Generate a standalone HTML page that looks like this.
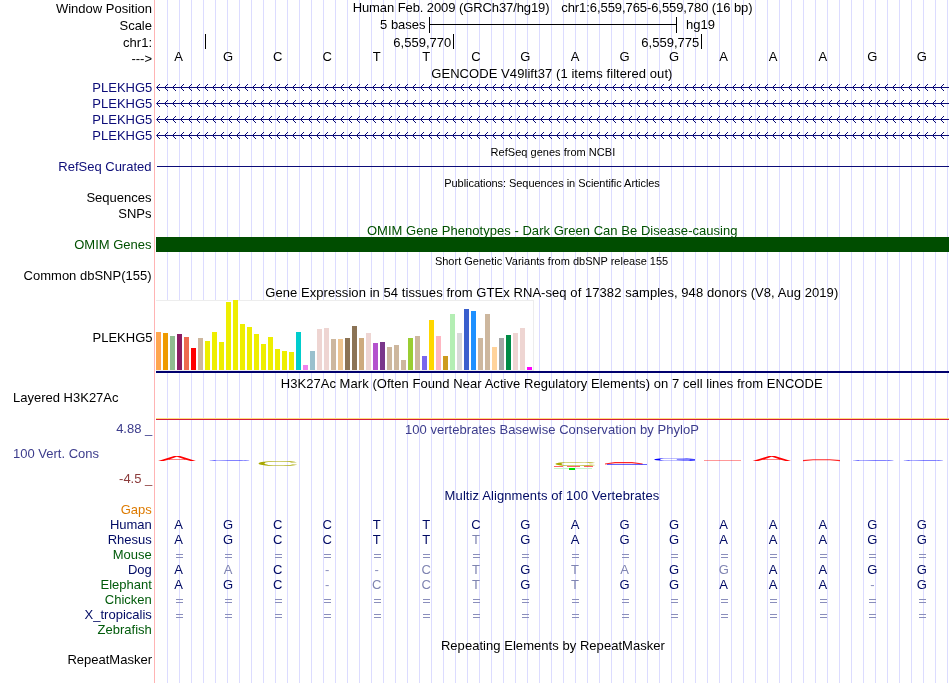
<!DOCTYPE html>
<html><head><meta charset="utf-8"><title>UCSC Genome Browser</title>
<style>
html,body{margin:0;padding:0;background:#fff;}
body{width:950px;height:683px;overflow:hidden;}
svg{display:block;will-change:transform;font-family:"Liberation Sans",sans-serif;font-size:13px;}
.s{font-size:11px;}
.r{text-anchor:end;}
.m{text-anchor:middle;}
</style></head><body>
<svg width="950" height="683" viewBox="0 0 950 683">
<rect width="950" height="683" fill="#fff"/>
<path d="M167.5 0V683M179.5 0V683M191.5 0V683M203.5 0V683M215.5 0V683M227.5 0V683M239.5 0V683M251.5 0V683M263.5 0V683M275.5 0V683M287.5 0V683M299.5 0V683M311.5 0V683M323.5 0V683M335.5 0V683M347.5 0V683M359.5 0V683M371.5 0V683M383.5 0V683M395.5 0V683M407.5 0V683M419.5 0V683M431.5 0V683M443.5 0V683M455.5 0V683M467.5 0V683M479.5 0V683M491.5 0V683M503.5 0V683M515.5 0V683M527.5 0V683M539.5 0V683M551.5 0V683M563.5 0V683M575.5 0V683M587.5 0V683M599.5 0V683M611.5 0V683M623.5 0V683M635.5 0V683M647.5 0V683M659.5 0V683M671.5 0V683M683.5 0V683M695.5 0V683M707.5 0V683M719.5 0V683M731.5 0V683M743.5 0V683M755.5 0V683M767.5 0V683M779.5 0V683M791.5 0V683M803.5 0V683M815.5 0V683M827.5 0V683M839.5 0V683M851.5 0V683M863.5 0V683M875.5 0V683M887.5 0V683M899.5 0V683M911.5 0V683M923.5 0V683M935.5 0V683M947.5 0V683" stroke="#dcdcff" stroke-width="1" fill="none" shape-rendering="crispEdges"/>
<path d="M154.5 0V683" stroke="#ffb4b4" stroke-width="1" shape-rendering="crispEdges"/>
<text x="152" y="13" class="r" fill="#000">Window Position</text>
<text x="152" y="30" class="r" fill="#000">Scale</text>
<text x="152" y="47" class="r" fill="#000">chr1:</text>
<text x="152" y="63" class="r" fill="#000">---&gt;</text>
<text x="352.70" y="12" fill="#000" textLength="196.85" xml:space="preserve">Human Feb. 2009 (GRCh37/hg19)</text>
<text x="561.30" y="12" fill="#000" textLength="191.30" xml:space="preserve">chr1:6,559,765-6,559,780 (16 bp)</text>
<text x="425.6" y="29" class="r" fill="#000">5 bases</text>
<text x="686" y="29" fill="#000">hg19</text>
<path d="M429.5 17V33M676.5 17V33M429 24.5H677" stroke="#000" stroke-width="1" fill="none" shape-rendering="crispEdges"/>
<path d="M205.5 34V49M453.5 34V49M701.5 34V49" stroke="#000" stroke-width="1" fill="none" shape-rendering="crispEdges"/>
<text x="451.2" y="47" class="r" fill="#000">6,559,770</text>
<text x="699.2" y="47" class="r" fill="#000">6,559,775</text>
<text x="178.5" y="61" class="m" fill="#000">A</text>
<text x="228.0" y="61" class="m" fill="#000">G</text>
<text x="277.6" y="61" class="m" fill="#000">C</text>
<text x="327.2" y="61" class="m" fill="#000">C</text>
<text x="376.7" y="61" class="m" fill="#000">T</text>
<text x="426.3" y="61" class="m" fill="#000">T</text>
<text x="475.9" y="61" class="m" fill="#000">C</text>
<text x="525.4" y="61" class="m" fill="#000">G</text>
<text x="575.0" y="61" class="m" fill="#000">A</text>
<text x="624.5" y="61" class="m" fill="#000">G</text>
<text x="674.1" y="61" class="m" fill="#000">G</text>
<text x="723.7" y="61" class="m" fill="#000">A</text>
<text x="773.2" y="61" class="m" fill="#000">A</text>
<text x="822.8" y="61" class="m" fill="#000">A</text>
<text x="872.4" y="61" class="m" fill="#000">G</text>
<text x="921.9" y="61" class="m" fill="#000">G</text>
<text x="431.20" y="78" fill="#000" textLength="241.22" xml:space="preserve">GENCODE V49lift37 (1 items filtered out)</text>
<text x="152.3" y="92" class="r" fill="#0c0c78">PLEKHG5</text>
<path d="M157 87.5H949" stroke="#0c0c78" stroke-width="1" shape-rendering="crispEdges"/>
<path d="M160.0 84.0L156.5 87.5L160.0 91.0M168.0 84.0L164.5 87.5L168.0 91.0M176.0 84.0L172.5 87.5L176.0 91.0M184.0 84.0L180.5 87.5L184.0 91.0M192.0 84.0L188.5 87.5L192.0 91.0M200.0 84.0L196.5 87.5L200.0 91.0M208.0 84.0L204.5 87.5L208.0 91.0M216.0 84.0L212.5 87.5L216.0 91.0M224.0 84.0L220.5 87.5L224.0 91.0M232.0 84.0L228.5 87.5L232.0 91.0M240.0 84.0L236.5 87.5L240.0 91.0M248.0 84.0L244.5 87.5L248.0 91.0M256.0 84.0L252.5 87.5L256.0 91.0M264.0 84.0L260.5 87.5L264.0 91.0M272.0 84.0L268.5 87.5L272.0 91.0M280.0 84.0L276.5 87.5L280.0 91.0M288.0 84.0L284.5 87.5L288.0 91.0M296.0 84.0L292.5 87.5L296.0 91.0M304.0 84.0L300.5 87.5L304.0 91.0M312.0 84.0L308.5 87.5L312.0 91.0M320.0 84.0L316.5 87.5L320.0 91.0M328.0 84.0L324.5 87.5L328.0 91.0M336.0 84.0L332.5 87.5L336.0 91.0M344.0 84.0L340.5 87.5L344.0 91.0M352.0 84.0L348.5 87.5L352.0 91.0M360.0 84.0L356.5 87.5L360.0 91.0M368.0 84.0L364.5 87.5L368.0 91.0M376.0 84.0L372.5 87.5L376.0 91.0M384.0 84.0L380.5 87.5L384.0 91.0M392.0 84.0L388.5 87.5L392.0 91.0M400.0 84.0L396.5 87.5L400.0 91.0M408.0 84.0L404.5 87.5L408.0 91.0M416.0 84.0L412.5 87.5L416.0 91.0M424.0 84.0L420.5 87.5L424.0 91.0M432.0 84.0L428.5 87.5L432.0 91.0M440.0 84.0L436.5 87.5L440.0 91.0M448.0 84.0L444.5 87.5L448.0 91.0M456.0 84.0L452.5 87.5L456.0 91.0M464.0 84.0L460.5 87.5L464.0 91.0M472.0 84.0L468.5 87.5L472.0 91.0M480.0 84.0L476.5 87.5L480.0 91.0M488.0 84.0L484.5 87.5L488.0 91.0M496.0 84.0L492.5 87.5L496.0 91.0M504.0 84.0L500.5 87.5L504.0 91.0M512.0 84.0L508.5 87.5L512.0 91.0M520.0 84.0L516.5 87.5L520.0 91.0M528.0 84.0L524.5 87.5L528.0 91.0M536.0 84.0L532.5 87.5L536.0 91.0M544.0 84.0L540.5 87.5L544.0 91.0M552.0 84.0L548.5 87.5L552.0 91.0M560.0 84.0L556.5 87.5L560.0 91.0M568.0 84.0L564.5 87.5L568.0 91.0M576.0 84.0L572.5 87.5L576.0 91.0M584.0 84.0L580.5 87.5L584.0 91.0M592.0 84.0L588.5 87.5L592.0 91.0M600.0 84.0L596.5 87.5L600.0 91.0M608.0 84.0L604.5 87.5L608.0 91.0M616.0 84.0L612.5 87.5L616.0 91.0M624.0 84.0L620.5 87.5L624.0 91.0M632.0 84.0L628.5 87.5L632.0 91.0M640.0 84.0L636.5 87.5L640.0 91.0M648.0 84.0L644.5 87.5L648.0 91.0M656.0 84.0L652.5 87.5L656.0 91.0M664.0 84.0L660.5 87.5L664.0 91.0M672.0 84.0L668.5 87.5L672.0 91.0M680.0 84.0L676.5 87.5L680.0 91.0M688.0 84.0L684.5 87.5L688.0 91.0M696.0 84.0L692.5 87.5L696.0 91.0M704.0 84.0L700.5 87.5L704.0 91.0M712.0 84.0L708.5 87.5L712.0 91.0M720.0 84.0L716.5 87.5L720.0 91.0M728.0 84.0L724.5 87.5L728.0 91.0M736.0 84.0L732.5 87.5L736.0 91.0M744.0 84.0L740.5 87.5L744.0 91.0M752.0 84.0L748.5 87.5L752.0 91.0M760.0 84.0L756.5 87.5L760.0 91.0M768.0 84.0L764.5 87.5L768.0 91.0M776.0 84.0L772.5 87.5L776.0 91.0M784.0 84.0L780.5 87.5L784.0 91.0M792.0 84.0L788.5 87.5L792.0 91.0M800.0 84.0L796.5 87.5L800.0 91.0M808.0 84.0L804.5 87.5L808.0 91.0M816.0 84.0L812.5 87.5L816.0 91.0M824.0 84.0L820.5 87.5L824.0 91.0M832.0 84.0L828.5 87.5L832.0 91.0M840.0 84.0L836.5 87.5L840.0 91.0M848.0 84.0L844.5 87.5L848.0 91.0M856.0 84.0L852.5 87.5L856.0 91.0M864.0 84.0L860.5 87.5L864.0 91.0M872.0 84.0L868.5 87.5L872.0 91.0M880.0 84.0L876.5 87.5L880.0 91.0M888.0 84.0L884.5 87.5L888.0 91.0M896.0 84.0L892.5 87.5L896.0 91.0M904.0 84.0L900.5 87.5L904.0 91.0M912.0 84.0L908.5 87.5L912.0 91.0M920.0 84.0L916.5 87.5L920.0 91.0M928.0 84.0L924.5 87.5L928.0 91.0M936.0 84.0L932.5 87.5L936.0 91.0M944.0 84.0L940.5 87.5L944.0 91.0" stroke="#0c0c78" stroke-width="1" fill="none"/>
<text x="152.3" y="108" class="r" fill="#0c0c78">PLEKHG5</text>
<path d="M157 103.5H949" stroke="#0c0c78" stroke-width="1" shape-rendering="crispEdges"/>
<path d="M160.0 100.0L156.5 103.5L160.0 107.0M168.0 100.0L164.5 103.5L168.0 107.0M176.0 100.0L172.5 103.5L176.0 107.0M184.0 100.0L180.5 103.5L184.0 107.0M192.0 100.0L188.5 103.5L192.0 107.0M200.0 100.0L196.5 103.5L200.0 107.0M208.0 100.0L204.5 103.5L208.0 107.0M216.0 100.0L212.5 103.5L216.0 107.0M224.0 100.0L220.5 103.5L224.0 107.0M232.0 100.0L228.5 103.5L232.0 107.0M240.0 100.0L236.5 103.5L240.0 107.0M248.0 100.0L244.5 103.5L248.0 107.0M256.0 100.0L252.5 103.5L256.0 107.0M264.0 100.0L260.5 103.5L264.0 107.0M272.0 100.0L268.5 103.5L272.0 107.0M280.0 100.0L276.5 103.5L280.0 107.0M288.0 100.0L284.5 103.5L288.0 107.0M296.0 100.0L292.5 103.5L296.0 107.0M304.0 100.0L300.5 103.5L304.0 107.0M312.0 100.0L308.5 103.5L312.0 107.0M320.0 100.0L316.5 103.5L320.0 107.0M328.0 100.0L324.5 103.5L328.0 107.0M336.0 100.0L332.5 103.5L336.0 107.0M344.0 100.0L340.5 103.5L344.0 107.0M352.0 100.0L348.5 103.5L352.0 107.0M360.0 100.0L356.5 103.5L360.0 107.0M368.0 100.0L364.5 103.5L368.0 107.0M376.0 100.0L372.5 103.5L376.0 107.0M384.0 100.0L380.5 103.5L384.0 107.0M392.0 100.0L388.5 103.5L392.0 107.0M400.0 100.0L396.5 103.5L400.0 107.0M408.0 100.0L404.5 103.5L408.0 107.0M416.0 100.0L412.5 103.5L416.0 107.0M424.0 100.0L420.5 103.5L424.0 107.0M432.0 100.0L428.5 103.5L432.0 107.0M440.0 100.0L436.5 103.5L440.0 107.0M448.0 100.0L444.5 103.5L448.0 107.0M456.0 100.0L452.5 103.5L456.0 107.0M464.0 100.0L460.5 103.5L464.0 107.0M472.0 100.0L468.5 103.5L472.0 107.0M480.0 100.0L476.5 103.5L480.0 107.0M488.0 100.0L484.5 103.5L488.0 107.0M496.0 100.0L492.5 103.5L496.0 107.0M504.0 100.0L500.5 103.5L504.0 107.0M512.0 100.0L508.5 103.5L512.0 107.0M520.0 100.0L516.5 103.5L520.0 107.0M528.0 100.0L524.5 103.5L528.0 107.0M536.0 100.0L532.5 103.5L536.0 107.0M544.0 100.0L540.5 103.5L544.0 107.0M552.0 100.0L548.5 103.5L552.0 107.0M560.0 100.0L556.5 103.5L560.0 107.0M568.0 100.0L564.5 103.5L568.0 107.0M576.0 100.0L572.5 103.5L576.0 107.0M584.0 100.0L580.5 103.5L584.0 107.0M592.0 100.0L588.5 103.5L592.0 107.0M600.0 100.0L596.5 103.5L600.0 107.0M608.0 100.0L604.5 103.5L608.0 107.0M616.0 100.0L612.5 103.5L616.0 107.0M624.0 100.0L620.5 103.5L624.0 107.0M632.0 100.0L628.5 103.5L632.0 107.0M640.0 100.0L636.5 103.5L640.0 107.0M648.0 100.0L644.5 103.5L648.0 107.0M656.0 100.0L652.5 103.5L656.0 107.0M664.0 100.0L660.5 103.5L664.0 107.0M672.0 100.0L668.5 103.5L672.0 107.0M680.0 100.0L676.5 103.5L680.0 107.0M688.0 100.0L684.5 103.5L688.0 107.0M696.0 100.0L692.5 103.5L696.0 107.0M704.0 100.0L700.5 103.5L704.0 107.0M712.0 100.0L708.5 103.5L712.0 107.0M720.0 100.0L716.5 103.5L720.0 107.0M728.0 100.0L724.5 103.5L728.0 107.0M736.0 100.0L732.5 103.5L736.0 107.0M744.0 100.0L740.5 103.5L744.0 107.0M752.0 100.0L748.5 103.5L752.0 107.0M760.0 100.0L756.5 103.5L760.0 107.0M768.0 100.0L764.5 103.5L768.0 107.0M776.0 100.0L772.5 103.5L776.0 107.0M784.0 100.0L780.5 103.5L784.0 107.0M792.0 100.0L788.5 103.5L792.0 107.0M800.0 100.0L796.5 103.5L800.0 107.0M808.0 100.0L804.5 103.5L808.0 107.0M816.0 100.0L812.5 103.5L816.0 107.0M824.0 100.0L820.5 103.5L824.0 107.0M832.0 100.0L828.5 103.5L832.0 107.0M840.0 100.0L836.5 103.5L840.0 107.0M848.0 100.0L844.5 103.5L848.0 107.0M856.0 100.0L852.5 103.5L856.0 107.0M864.0 100.0L860.5 103.5L864.0 107.0M872.0 100.0L868.5 103.5L872.0 107.0M880.0 100.0L876.5 103.5L880.0 107.0M888.0 100.0L884.5 103.5L888.0 107.0M896.0 100.0L892.5 103.5L896.0 107.0M904.0 100.0L900.5 103.5L904.0 107.0M912.0 100.0L908.5 103.5L912.0 107.0M920.0 100.0L916.5 103.5L920.0 107.0M928.0 100.0L924.5 103.5L928.0 107.0M936.0 100.0L932.5 103.5L936.0 107.0M944.0 100.0L940.5 103.5L944.0 107.0" stroke="#0c0c78" stroke-width="1" fill="none"/>
<text x="152.3" y="124" class="r" fill="#0c0c78">PLEKHG5</text>
<path d="M157 119.5H949" stroke="#0c0c78" stroke-width="1" shape-rendering="crispEdges"/>
<path d="M160.0 116.0L156.5 119.5L160.0 123.0M168.0 116.0L164.5 119.5L168.0 123.0M176.0 116.0L172.5 119.5L176.0 123.0M184.0 116.0L180.5 119.5L184.0 123.0M192.0 116.0L188.5 119.5L192.0 123.0M200.0 116.0L196.5 119.5L200.0 123.0M208.0 116.0L204.5 119.5L208.0 123.0M216.0 116.0L212.5 119.5L216.0 123.0M224.0 116.0L220.5 119.5L224.0 123.0M232.0 116.0L228.5 119.5L232.0 123.0M240.0 116.0L236.5 119.5L240.0 123.0M248.0 116.0L244.5 119.5L248.0 123.0M256.0 116.0L252.5 119.5L256.0 123.0M264.0 116.0L260.5 119.5L264.0 123.0M272.0 116.0L268.5 119.5L272.0 123.0M280.0 116.0L276.5 119.5L280.0 123.0M288.0 116.0L284.5 119.5L288.0 123.0M296.0 116.0L292.5 119.5L296.0 123.0M304.0 116.0L300.5 119.5L304.0 123.0M312.0 116.0L308.5 119.5L312.0 123.0M320.0 116.0L316.5 119.5L320.0 123.0M328.0 116.0L324.5 119.5L328.0 123.0M336.0 116.0L332.5 119.5L336.0 123.0M344.0 116.0L340.5 119.5L344.0 123.0M352.0 116.0L348.5 119.5L352.0 123.0M360.0 116.0L356.5 119.5L360.0 123.0M368.0 116.0L364.5 119.5L368.0 123.0M376.0 116.0L372.5 119.5L376.0 123.0M384.0 116.0L380.5 119.5L384.0 123.0M392.0 116.0L388.5 119.5L392.0 123.0M400.0 116.0L396.5 119.5L400.0 123.0M408.0 116.0L404.5 119.5L408.0 123.0M416.0 116.0L412.5 119.5L416.0 123.0M424.0 116.0L420.5 119.5L424.0 123.0M432.0 116.0L428.5 119.5L432.0 123.0M440.0 116.0L436.5 119.5L440.0 123.0M448.0 116.0L444.5 119.5L448.0 123.0M456.0 116.0L452.5 119.5L456.0 123.0M464.0 116.0L460.5 119.5L464.0 123.0M472.0 116.0L468.5 119.5L472.0 123.0M480.0 116.0L476.5 119.5L480.0 123.0M488.0 116.0L484.5 119.5L488.0 123.0M496.0 116.0L492.5 119.5L496.0 123.0M504.0 116.0L500.5 119.5L504.0 123.0M512.0 116.0L508.5 119.5L512.0 123.0M520.0 116.0L516.5 119.5L520.0 123.0M528.0 116.0L524.5 119.5L528.0 123.0M536.0 116.0L532.5 119.5L536.0 123.0M544.0 116.0L540.5 119.5L544.0 123.0M552.0 116.0L548.5 119.5L552.0 123.0M560.0 116.0L556.5 119.5L560.0 123.0M568.0 116.0L564.5 119.5L568.0 123.0M576.0 116.0L572.5 119.5L576.0 123.0M584.0 116.0L580.5 119.5L584.0 123.0M592.0 116.0L588.5 119.5L592.0 123.0M600.0 116.0L596.5 119.5L600.0 123.0M608.0 116.0L604.5 119.5L608.0 123.0M616.0 116.0L612.5 119.5L616.0 123.0M624.0 116.0L620.5 119.5L624.0 123.0M632.0 116.0L628.5 119.5L632.0 123.0M640.0 116.0L636.5 119.5L640.0 123.0M648.0 116.0L644.5 119.5L648.0 123.0M656.0 116.0L652.5 119.5L656.0 123.0M664.0 116.0L660.5 119.5L664.0 123.0M672.0 116.0L668.5 119.5L672.0 123.0M680.0 116.0L676.5 119.5L680.0 123.0M688.0 116.0L684.5 119.5L688.0 123.0M696.0 116.0L692.5 119.5L696.0 123.0M704.0 116.0L700.5 119.5L704.0 123.0M712.0 116.0L708.5 119.5L712.0 123.0M720.0 116.0L716.5 119.5L720.0 123.0M728.0 116.0L724.5 119.5L728.0 123.0M736.0 116.0L732.5 119.5L736.0 123.0M744.0 116.0L740.5 119.5L744.0 123.0M752.0 116.0L748.5 119.5L752.0 123.0M760.0 116.0L756.5 119.5L760.0 123.0M768.0 116.0L764.5 119.5L768.0 123.0M776.0 116.0L772.5 119.5L776.0 123.0M784.0 116.0L780.5 119.5L784.0 123.0M792.0 116.0L788.5 119.5L792.0 123.0M800.0 116.0L796.5 119.5L800.0 123.0M808.0 116.0L804.5 119.5L808.0 123.0M816.0 116.0L812.5 119.5L816.0 123.0M824.0 116.0L820.5 119.5L824.0 123.0M832.0 116.0L828.5 119.5L832.0 123.0M840.0 116.0L836.5 119.5L840.0 123.0M848.0 116.0L844.5 119.5L848.0 123.0M856.0 116.0L852.5 119.5L856.0 123.0M864.0 116.0L860.5 119.5L864.0 123.0M872.0 116.0L868.5 119.5L872.0 123.0M880.0 116.0L876.5 119.5L880.0 123.0M888.0 116.0L884.5 119.5L888.0 123.0M896.0 116.0L892.5 119.5L896.0 123.0M904.0 116.0L900.5 119.5L904.0 123.0M912.0 116.0L908.5 119.5L912.0 123.0M920.0 116.0L916.5 119.5L920.0 123.0M928.0 116.0L924.5 119.5L928.0 123.0M936.0 116.0L932.5 119.5L936.0 123.0M944.0 116.0L940.5 119.5L944.0 123.0" stroke="#0c0c78" stroke-width="1" fill="none"/>
<text x="152.3" y="140" class="r" fill="#0c0c78">PLEKHG5</text>
<path d="M157 135.5H949" stroke="#0c0c78" stroke-width="1" shape-rendering="crispEdges"/>
<path d="M160.0 132.0L156.5 135.5L160.0 139.0M168.0 132.0L164.5 135.5L168.0 139.0M176.0 132.0L172.5 135.5L176.0 139.0M184.0 132.0L180.5 135.5L184.0 139.0M192.0 132.0L188.5 135.5L192.0 139.0M200.0 132.0L196.5 135.5L200.0 139.0M208.0 132.0L204.5 135.5L208.0 139.0M216.0 132.0L212.5 135.5L216.0 139.0M224.0 132.0L220.5 135.5L224.0 139.0M232.0 132.0L228.5 135.5L232.0 139.0M240.0 132.0L236.5 135.5L240.0 139.0M248.0 132.0L244.5 135.5L248.0 139.0M256.0 132.0L252.5 135.5L256.0 139.0M264.0 132.0L260.5 135.5L264.0 139.0M272.0 132.0L268.5 135.5L272.0 139.0M280.0 132.0L276.5 135.5L280.0 139.0M288.0 132.0L284.5 135.5L288.0 139.0M296.0 132.0L292.5 135.5L296.0 139.0M304.0 132.0L300.5 135.5L304.0 139.0M312.0 132.0L308.5 135.5L312.0 139.0M320.0 132.0L316.5 135.5L320.0 139.0M328.0 132.0L324.5 135.5L328.0 139.0M336.0 132.0L332.5 135.5L336.0 139.0M344.0 132.0L340.5 135.5L344.0 139.0M352.0 132.0L348.5 135.5L352.0 139.0M360.0 132.0L356.5 135.5L360.0 139.0M368.0 132.0L364.5 135.5L368.0 139.0M376.0 132.0L372.5 135.5L376.0 139.0M384.0 132.0L380.5 135.5L384.0 139.0M392.0 132.0L388.5 135.5L392.0 139.0M400.0 132.0L396.5 135.5L400.0 139.0M408.0 132.0L404.5 135.5L408.0 139.0M416.0 132.0L412.5 135.5L416.0 139.0M424.0 132.0L420.5 135.5L424.0 139.0M432.0 132.0L428.5 135.5L432.0 139.0M440.0 132.0L436.5 135.5L440.0 139.0M448.0 132.0L444.5 135.5L448.0 139.0M456.0 132.0L452.5 135.5L456.0 139.0M464.0 132.0L460.5 135.5L464.0 139.0M472.0 132.0L468.5 135.5L472.0 139.0M480.0 132.0L476.5 135.5L480.0 139.0M488.0 132.0L484.5 135.5L488.0 139.0M496.0 132.0L492.5 135.5L496.0 139.0M504.0 132.0L500.5 135.5L504.0 139.0M512.0 132.0L508.5 135.5L512.0 139.0M520.0 132.0L516.5 135.5L520.0 139.0M528.0 132.0L524.5 135.5L528.0 139.0M536.0 132.0L532.5 135.5L536.0 139.0M544.0 132.0L540.5 135.5L544.0 139.0M552.0 132.0L548.5 135.5L552.0 139.0M560.0 132.0L556.5 135.5L560.0 139.0M568.0 132.0L564.5 135.5L568.0 139.0M576.0 132.0L572.5 135.5L576.0 139.0M584.0 132.0L580.5 135.5L584.0 139.0M592.0 132.0L588.5 135.5L592.0 139.0M600.0 132.0L596.5 135.5L600.0 139.0M608.0 132.0L604.5 135.5L608.0 139.0M616.0 132.0L612.5 135.5L616.0 139.0M624.0 132.0L620.5 135.5L624.0 139.0M632.0 132.0L628.5 135.5L632.0 139.0M640.0 132.0L636.5 135.5L640.0 139.0M648.0 132.0L644.5 135.5L648.0 139.0M656.0 132.0L652.5 135.5L656.0 139.0M664.0 132.0L660.5 135.5L664.0 139.0M672.0 132.0L668.5 135.5L672.0 139.0M680.0 132.0L676.5 135.5L680.0 139.0M688.0 132.0L684.5 135.5L688.0 139.0M696.0 132.0L692.5 135.5L696.0 139.0M704.0 132.0L700.5 135.5L704.0 139.0M712.0 132.0L708.5 135.5L712.0 139.0M720.0 132.0L716.5 135.5L720.0 139.0M728.0 132.0L724.5 135.5L728.0 139.0M736.0 132.0L732.5 135.5L736.0 139.0M744.0 132.0L740.5 135.5L744.0 139.0M752.0 132.0L748.5 135.5L752.0 139.0M760.0 132.0L756.5 135.5L760.0 139.0M768.0 132.0L764.5 135.5L768.0 139.0M776.0 132.0L772.5 135.5L776.0 139.0M784.0 132.0L780.5 135.5L784.0 139.0M792.0 132.0L788.5 135.5L792.0 139.0M800.0 132.0L796.5 135.5L800.0 139.0M808.0 132.0L804.5 135.5L808.0 139.0M816.0 132.0L812.5 135.5L816.0 139.0M824.0 132.0L820.5 135.5L824.0 139.0M832.0 132.0L828.5 135.5L832.0 139.0M840.0 132.0L836.5 135.5L840.0 139.0M848.0 132.0L844.5 135.5L848.0 139.0M856.0 132.0L852.5 135.5L856.0 139.0M864.0 132.0L860.5 135.5L864.0 139.0M872.0 132.0L868.5 135.5L872.0 139.0M880.0 132.0L876.5 135.5L880.0 139.0M888.0 132.0L884.5 135.5L888.0 139.0M896.0 132.0L892.5 135.5L896.0 139.0M904.0 132.0L900.5 135.5L904.0 139.0M912.0 132.0L908.5 135.5L912.0 139.0M920.0 132.0L916.5 135.5L920.0 139.0M928.0 132.0L924.5 135.5L928.0 139.0M936.0 132.0L932.5 135.5L936.0 139.0M944.0 132.0L940.5 135.5L944.0 139.0" stroke="#0c0c78" stroke-width="1" fill="none"/>
<text x="490.60" y="156" fill="#000" class="s" textLength="124.62" xml:space="preserve">RefSeq genes from NCBI</text>
<text x="151.5" y="171" class="r" fill="#0c0c78">RefSeq Curated</text>
<path d="M157 166.5H949" stroke="#0c0c78" stroke-width="1" shape-rendering="crispEdges"/>
<text x="444.20" y="187" fill="#000" class="s" textLength="215.67" xml:space="preserve">Publications: Sequences in Scientific Articles</text>
<text x="151.5" y="202" class="r" fill="#000">Sequences</text>
<text x="151.5" y="218" class="r" fill="#000">SNPs</text>
<text x="366.90" y="235" fill="#005000" textLength="370.62" xml:space="preserve">OMIM Gene Phenotypes - Dark Green Can Be Disease-causing</text>
<text x="151.5" y="249" class="r" fill="#005000">OMIM Genes</text>
<rect x="156" y="237" width="793" height="15" fill="#004d00" shape-rendering="crispEdges"/>
<text x="434.90" y="265" fill="#000" class="s" textLength="233.27" xml:space="preserve">Short Genetic Variants from dbSNP release 155</text>
<text x="151.5" y="280" class="r" fill="#000">Common dbSNP(155)</text>
<text x="265.30" y="297" fill="#000" textLength="572.95" xml:space="preserve">Gene Expression in 54 tissues from GTEx RNA-seq of 17382 samples, 948 donors (V8, Aug 2019)</text>
<text x="152.5" y="342" class="r" fill="#000">PLEKHG5</text>
<rect x="156" y="300" width="378" height="71" fill="#fff" shape-rendering="crispEdges"/>
<path d="M156 300.5H534M533.5 300V371M156 370.5H534" stroke="#ededed" stroke-width="1" fill="none" shape-rendering="crispEdges"/>
<rect x="156" y="332" width="5" height="38" fill="#ffa54f" shape-rendering="crispEdges"/>
<rect x="163" y="333" width="5" height="37" fill="#ee9a00" shape-rendering="crispEdges"/>
<rect x="170" y="336" width="5" height="34" fill="#8fbc8f" shape-rendering="crispEdges"/>
<rect x="177" y="334" width="5" height="36" fill="#8b1c62" shape-rendering="crispEdges"/>
<rect x="184" y="337" width="5" height="33" fill="#ee6a50" shape-rendering="crispEdges"/>
<rect x="191" y="348" width="5" height="22" fill="#ff0000" shape-rendering="crispEdges"/>
<rect x="198" y="338" width="5" height="32" fill="#cdb79e" shape-rendering="crispEdges"/>
<rect x="205" y="341" width="5" height="29" fill="#eeee00" shape-rendering="crispEdges"/>
<rect x="212" y="332" width="5" height="38" fill="#eeee00" shape-rendering="crispEdges"/>
<rect x="219" y="342" width="5" height="28" fill="#eeee00" shape-rendering="crispEdges"/>
<rect x="226" y="302" width="5" height="68" fill="#eeee00" shape-rendering="crispEdges"/>
<rect x="233" y="300" width="5" height="70" fill="#eeee00" shape-rendering="crispEdges"/>
<rect x="240" y="324" width="5" height="46" fill="#eeee00" shape-rendering="crispEdges"/>
<rect x="247" y="327" width="5" height="43" fill="#eeee00" shape-rendering="crispEdges"/>
<rect x="254" y="334" width="5" height="36" fill="#eeee00" shape-rendering="crispEdges"/>
<rect x="261" y="344" width="5" height="26" fill="#eeee00" shape-rendering="crispEdges"/>
<rect x="268" y="337" width="5" height="33" fill="#eeee00" shape-rendering="crispEdges"/>
<rect x="275" y="349" width="5" height="21" fill="#eeee00" shape-rendering="crispEdges"/>
<rect x="282" y="351" width="5" height="19" fill="#eeee00" shape-rendering="crispEdges"/>
<rect x="289" y="352" width="5" height="18" fill="#eeee00" shape-rendering="crispEdges"/>
<rect x="296" y="332" width="5" height="38" fill="#00cdcd" shape-rendering="crispEdges"/>
<rect x="303" y="365" width="5" height="5" fill="#ee82ee" shape-rendering="crispEdges"/>
<rect x="310" y="351" width="5" height="19" fill="#9ac0cd" shape-rendering="crispEdges"/>
<rect x="317" y="329" width="5" height="41" fill="#eed5d2" shape-rendering="crispEdges"/>
<rect x="324" y="328" width="5" height="42" fill="#eed5d2" shape-rendering="crispEdges"/>
<rect x="331" y="339" width="5" height="31" fill="#cdb79e" shape-rendering="crispEdges"/>
<rect x="338" y="339" width="5" height="31" fill="#eec591" shape-rendering="crispEdges"/>
<rect x="345" y="338" width="5" height="32" fill="#8b7355" shape-rendering="crispEdges"/>
<rect x="352" y="326" width="5" height="44" fill="#8b7355" shape-rendering="crispEdges"/>
<rect x="359" y="338" width="5" height="32" fill="#cdaa7d" shape-rendering="crispEdges"/>
<rect x="366" y="333" width="5" height="37" fill="#eed5d2" shape-rendering="crispEdges"/>
<rect x="373" y="343" width="5" height="27" fill="#b452cd" shape-rendering="crispEdges"/>
<rect x="380" y="342" width="5" height="28" fill="#7a378b" shape-rendering="crispEdges"/>
<rect x="387" y="347" width="5" height="23" fill="#cdb79e" shape-rendering="crispEdges"/>
<rect x="394" y="345" width="5" height="25" fill="#cdb79e" shape-rendering="crispEdges"/>
<rect x="401" y="360" width="5" height="10" fill="#cdb79e" shape-rendering="crispEdges"/>
<rect x="408" y="338" width="5" height="32" fill="#9acd32" shape-rendering="crispEdges"/>
<rect x="415" y="336" width="5" height="34" fill="#cdb79e" shape-rendering="crispEdges"/>
<rect x="422" y="356" width="5" height="14" fill="#7a67ee" shape-rendering="crispEdges"/>
<rect x="429" y="320" width="5" height="50" fill="#ffd700" shape-rendering="crispEdges"/>
<rect x="436" y="336" width="5" height="34" fill="#ffb6c1" shape-rendering="crispEdges"/>
<rect x="443" y="356" width="5" height="14" fill="#cd9b1d" shape-rendering="crispEdges"/>
<rect x="450" y="314" width="5" height="56" fill="#b4eeb4" shape-rendering="crispEdges"/>
<rect x="457" y="333" width="5" height="37" fill="#d9d9d9" shape-rendering="crispEdges"/>
<rect x="464" y="309" width="5" height="61" fill="#3a5fcd" shape-rendering="crispEdges"/>
<rect x="471" y="311" width="5" height="59" fill="#1e90ff" shape-rendering="crispEdges"/>
<rect x="478" y="338" width="5" height="32" fill="#cdb79e" shape-rendering="crispEdges"/>
<rect x="485" y="314" width="5" height="56" fill="#cdb79e" shape-rendering="crispEdges"/>
<rect x="492" y="347" width="5" height="23" fill="#ffd39b" shape-rendering="crispEdges"/>
<rect x="499" y="338" width="5" height="32" fill="#a6a6a6" shape-rendering="crispEdges"/>
<rect x="506" y="335" width="5" height="35" fill="#008b45" shape-rendering="crispEdges"/>
<rect x="513" y="333" width="5" height="37" fill="#eed5d2" shape-rendering="crispEdges"/>
<rect x="520" y="328" width="5" height="42" fill="#eed5d2" shape-rendering="crispEdges"/>
<rect x="527" y="367" width="5" height="3" fill="#ff00ff" shape-rendering="crispEdges"/>
<rect x="156" y="371" width="793" height="2" fill="#00006e" shape-rendering="crispEdges"/>
<text x="280.70" y="388" fill="#000" textLength="541.95" xml:space="preserve">H3K27Ac Mark (Often Found Near Active Regulatory Elements) on 7 cell lines from ENCODE</text>
<text x="13" y="402" fill="#000">Layered H3K27Ac</text>
<path d="M156 418.5H949" stroke="#ffdc80" stroke-width="1" shape-rendering="crispEdges"/>
<path d="M156 419.5H949" stroke="#d41c3c" stroke-width="1" shape-rendering="crispEdges"/>
<text x="404.90" y="434" fill="#3c3c8c" textLength="293.94" xml:space="preserve">100 vertebrates Basewise Conservation by PhyloP</text>
<text x="152.3" y="433" class="r" fill="#3c3c8c">4.88 _</text>
<text x="13" y="458" fill="#3c3c8c">100 Vert. Cons</text>
<text x="152.3" y="483" class="r" fill="#8c3c3c">-4.5 _</text>
<text transform="translate(158.00 461.00) scale(1.0971 0.1370)" x="0" y="0" font-size="52" fill="#ff0000">A</text>
<text transform="translate(206.04 461.00) scale(1.1882 0.0274)" x="0" y="0" font-size="52" fill="#0000ff">G</text>
<text transform="translate(255.47 466.30) scale(1.1781 0.1315)" x="0" y="0" font-size="52" fill="#a8a800">C</text>
<text transform="translate(552.15 466.30) scale(1.2156 0.1123)" x="0" y="0" font-size="52" fill="#a8a800">C</text>
<path d="M554 466.5H593" stroke="#ff0000" stroke-width="1" opacity="0.6" stroke-dasharray="9 4 13 4 9" shape-rendering="crispEdges"/>
<path d="M554 468.5H592" stroke="#c8f5c8" stroke-width="1" shape-rendering="crispEdges"/>
<rect x="569" y="468" width="6" height="2" fill="#00e000" shape-rendering="crispEdges"/>
<path d="M605 464L615 462.6H632L642.6 464" stroke="#ff0000" stroke-width="1.1" fill="none" opacity="0.85"/>
<path d="M607 464.5H647" stroke="#0000ff" stroke-width="1" opacity="0.6" shape-rendering="crispEdges"/>
<text transform="translate(650.97 461.00) scale(1.2088 0.0822)" x="0" y="0" font-size="52" fill="#0000ff">G</text>
<path d="M704 460.5H741" stroke="#ff0000" stroke-width="1" opacity="0.4" shape-rendering="crispEdges"/>
<text transform="translate(752.50 461.00) scale(1.1147 0.1370)" x="0" y="0" font-size="52" fill="#ff0000">A</text>
<path d="M803 460.6L813 459.7H830L840 460.6" stroke="#ff0000" stroke-width="1.1" fill="none" opacity="0.85"/>
<text transform="translate(849.38 461.00) scale(1.2059 0.0274)" x="0" y="0" font-size="52" fill="#0000ff">G</text>
<text transform="translate(900.17 461.00) scale(1.1765 0.0274)" x="0" y="0" font-size="52" fill="#0000ff">G</text>
<text x="444.60" y="500" fill="#000a64" textLength="214.72" xml:space="preserve">Multiz Alignments of 100 Vertebrates</text>
<text x="151.8" y="514" class="r" fill="#dd7a00">Gaps</text>
<text x="151.8" y="529" class="r" fill="#000a64">Human</text>
<text x="151.8" y="544" class="r" fill="#000a64">Rhesus</text>
<text x="151.8" y="559" class="r" fill="#005a0a">Mouse</text>
<text x="151.8" y="574" class="r" fill="#000a64">Dog</text>
<text x="151.8" y="589" class="r" fill="#005a0a">Elephant</text>
<text x="151.8" y="604" class="r" fill="#005a0a">Chicken</text>
<text x="151.8" y="619" class="r" fill="#000a64">X_tropicalis</text>
<text x="151.8" y="634" class="r" fill="#005a0a">Zebrafish</text>
<text x="178.5" y="529" class="m" fill="#000a64">A</text>
<text x="228.0" y="529" class="m" fill="#000a64">G</text>
<text x="277.6" y="529" class="m" fill="#000a64">C</text>
<text x="327.2" y="529" class="m" fill="#000a64">C</text>
<text x="376.7" y="529" class="m" fill="#000a64">T</text>
<text x="426.3" y="529" class="m" fill="#000a64">T</text>
<text x="475.9" y="529" class="m" fill="#000a64">C</text>
<text x="525.4" y="529" class="m" fill="#000a64">G</text>
<text x="575.0" y="529" class="m" fill="#000a64">A</text>
<text x="624.5" y="529" class="m" fill="#000a64">G</text>
<text x="674.1" y="529" class="m" fill="#000a64">G</text>
<text x="723.7" y="529" class="m" fill="#000a64">A</text>
<text x="773.2" y="529" class="m" fill="#000a64">A</text>
<text x="822.8" y="529" class="m" fill="#000a64">A</text>
<text x="872.4" y="529" class="m" fill="#000a64">G</text>
<text x="921.9" y="529" class="m" fill="#000a64">G</text>
<text x="178.5" y="544" class="m" fill="#000a64">A</text>
<text x="228.0" y="544" class="m" fill="#000a64">G</text>
<text x="277.6" y="544" class="m" fill="#000a64">C</text>
<text x="327.2" y="544" class="m" fill="#000a64">C</text>
<text x="376.7" y="544" class="m" fill="#000a64">T</text>
<text x="426.3" y="544" class="m" fill="#000a64">T</text>
<text x="475.9" y="544" class="m" fill="#7f84b1">T</text>
<text x="525.4" y="544" class="m" fill="#000a64">G</text>
<text x="575.0" y="544" class="m" fill="#000a64">A</text>
<text x="624.5" y="544" class="m" fill="#000a64">G</text>
<text x="674.1" y="544" class="m" fill="#000a64">G</text>
<text x="723.7" y="544" class="m" fill="#000a64">A</text>
<text x="773.2" y="544" class="m" fill="#000a64">A</text>
<text x="822.8" y="544" class="m" fill="#000a64">A</text>
<text x="872.4" y="544" class="m" fill="#000a64">G</text>
<text x="921.9" y="544" class="m" fill="#000a64">G</text>
<path d="M175.5 554.5H182.5M175.5 557.5H182.5" stroke="#8a8ebc" stroke-width="1" shape-rendering="crispEdges"/>
<path d="M225.0 554.5H232.0M225.0 557.5H232.0" stroke="#8a8ebc" stroke-width="1" shape-rendering="crispEdges"/>
<path d="M274.6 554.5H281.6M274.6 557.5H281.6" stroke="#8a8ebc" stroke-width="1" shape-rendering="crispEdges"/>
<path d="M324.2 554.5H331.2M324.2 557.5H331.2" stroke="#8a8ebc" stroke-width="1" shape-rendering="crispEdges"/>
<path d="M373.7 554.5H380.7M373.7 557.5H380.7" stroke="#8a8ebc" stroke-width="1" shape-rendering="crispEdges"/>
<path d="M423.3 554.5H430.3M423.3 557.5H430.3" stroke="#8a8ebc" stroke-width="1" shape-rendering="crispEdges"/>
<path d="M472.9 554.5H479.9M472.9 557.5H479.9" stroke="#8a8ebc" stroke-width="1" shape-rendering="crispEdges"/>
<path d="M522.4 554.5H529.4M522.4 557.5H529.4" stroke="#8a8ebc" stroke-width="1" shape-rendering="crispEdges"/>
<path d="M572.0 554.5H579.0M572.0 557.5H579.0" stroke="#8a8ebc" stroke-width="1" shape-rendering="crispEdges"/>
<path d="M621.5 554.5H628.5M621.5 557.5H628.5" stroke="#8a8ebc" stroke-width="1" shape-rendering="crispEdges"/>
<path d="M671.1 554.5H678.1M671.1 557.5H678.1" stroke="#8a8ebc" stroke-width="1" shape-rendering="crispEdges"/>
<path d="M720.7 554.5H727.7M720.7 557.5H727.7" stroke="#8a8ebc" stroke-width="1" shape-rendering="crispEdges"/>
<path d="M770.2 554.5H777.2M770.2 557.5H777.2" stroke="#8a8ebc" stroke-width="1" shape-rendering="crispEdges"/>
<path d="M819.8 554.5H826.8M819.8 557.5H826.8" stroke="#8a8ebc" stroke-width="1" shape-rendering="crispEdges"/>
<path d="M869.4 554.5H876.4M869.4 557.5H876.4" stroke="#8a8ebc" stroke-width="1" shape-rendering="crispEdges"/>
<path d="M918.9 554.5H925.9M918.9 557.5H925.9" stroke="#8a8ebc" stroke-width="1" shape-rendering="crispEdges"/>
<text x="178.5" y="574" class="m" fill="#000a64">A</text>
<text x="228.0" y="574" class="m" fill="#7f84b1">A</text>
<text x="277.6" y="574" class="m" fill="#000a64">C</text>
<text x="327.2" y="574" class="m" fill="#8a8ebc">-</text>
<text x="376.7" y="574" class="m" fill="#8a8ebc">-</text>
<text x="426.3" y="574" class="m" fill="#7f84b1">C</text>
<text x="475.9" y="574" class="m" fill="#7f84b1">T</text>
<text x="525.4" y="574" class="m" fill="#000a64">G</text>
<text x="575.0" y="574" class="m" fill="#7f84b1">T</text>
<text x="624.5" y="574" class="m" fill="#7f84b1">A</text>
<text x="674.1" y="574" class="m" fill="#000a64">G</text>
<text x="723.7" y="574" class="m" fill="#7f84b1">G</text>
<text x="773.2" y="574" class="m" fill="#000a64">A</text>
<text x="822.8" y="574" class="m" fill="#000a64">A</text>
<text x="872.4" y="574" class="m" fill="#000a64">G</text>
<text x="921.9" y="574" class="m" fill="#000a64">G</text>
<text x="178.5" y="589" class="m" fill="#000a64">A</text>
<text x="228.0" y="589" class="m" fill="#000a64">G</text>
<text x="277.6" y="589" class="m" fill="#000a64">C</text>
<text x="327.2" y="589" class="m" fill="#8a8ebc">-</text>
<text x="376.7" y="589" class="m" fill="#7f84b1">C</text>
<text x="426.3" y="589" class="m" fill="#7f84b1">C</text>
<text x="475.9" y="589" class="m" fill="#7f84b1">T</text>
<text x="525.4" y="589" class="m" fill="#000a64">G</text>
<text x="575.0" y="589" class="m" fill="#7f84b1">T</text>
<text x="624.5" y="589" class="m" fill="#000a64">G</text>
<text x="674.1" y="589" class="m" fill="#000a64">G</text>
<text x="723.7" y="589" class="m" fill="#000a64">A</text>
<text x="773.2" y="589" class="m" fill="#000a64">A</text>
<text x="822.8" y="589" class="m" fill="#000a64">A</text>
<text x="872.4" y="589" class="m" fill="#8a8ebc">-</text>
<text x="921.9" y="589" class="m" fill="#000a64">G</text>
<path d="M175.5 599.5H182.5M175.5 602.5H182.5" stroke="#8a8ebc" stroke-width="1" shape-rendering="crispEdges"/>
<path d="M225.0 599.5H232.0M225.0 602.5H232.0" stroke="#8a8ebc" stroke-width="1" shape-rendering="crispEdges"/>
<path d="M274.6 599.5H281.6M274.6 602.5H281.6" stroke="#8a8ebc" stroke-width="1" shape-rendering="crispEdges"/>
<path d="M324.2 599.5H331.2M324.2 602.5H331.2" stroke="#8a8ebc" stroke-width="1" shape-rendering="crispEdges"/>
<path d="M373.7 599.5H380.7M373.7 602.5H380.7" stroke="#8a8ebc" stroke-width="1" shape-rendering="crispEdges"/>
<path d="M423.3 599.5H430.3M423.3 602.5H430.3" stroke="#8a8ebc" stroke-width="1" shape-rendering="crispEdges"/>
<path d="M472.9 599.5H479.9M472.9 602.5H479.9" stroke="#8a8ebc" stroke-width="1" shape-rendering="crispEdges"/>
<path d="M522.4 599.5H529.4M522.4 602.5H529.4" stroke="#8a8ebc" stroke-width="1" shape-rendering="crispEdges"/>
<path d="M572.0 599.5H579.0M572.0 602.5H579.0" stroke="#8a8ebc" stroke-width="1" shape-rendering="crispEdges"/>
<path d="M621.5 599.5H628.5M621.5 602.5H628.5" stroke="#8a8ebc" stroke-width="1" shape-rendering="crispEdges"/>
<path d="M671.1 599.5H678.1M671.1 602.5H678.1" stroke="#8a8ebc" stroke-width="1" shape-rendering="crispEdges"/>
<path d="M720.7 599.5H727.7M720.7 602.5H727.7" stroke="#8a8ebc" stroke-width="1" shape-rendering="crispEdges"/>
<path d="M770.2 599.5H777.2M770.2 602.5H777.2" stroke="#8a8ebc" stroke-width="1" shape-rendering="crispEdges"/>
<path d="M819.8 599.5H826.8M819.8 602.5H826.8" stroke="#8a8ebc" stroke-width="1" shape-rendering="crispEdges"/>
<path d="M869.4 599.5H876.4M869.4 602.5H876.4" stroke="#8a8ebc" stroke-width="1" shape-rendering="crispEdges"/>
<path d="M918.9 599.5H925.9M918.9 602.5H925.9" stroke="#8a8ebc" stroke-width="1" shape-rendering="crispEdges"/>
<path d="M175.5 614.5H182.5M175.5 617.5H182.5" stroke="#8a8ebc" stroke-width="1" shape-rendering="crispEdges"/>
<path d="M225.0 614.5H232.0M225.0 617.5H232.0" stroke="#8a8ebc" stroke-width="1" shape-rendering="crispEdges"/>
<path d="M274.6 614.5H281.6M274.6 617.5H281.6" stroke="#8a8ebc" stroke-width="1" shape-rendering="crispEdges"/>
<path d="M324.2 614.5H331.2M324.2 617.5H331.2" stroke="#8a8ebc" stroke-width="1" shape-rendering="crispEdges"/>
<path d="M373.7 614.5H380.7M373.7 617.5H380.7" stroke="#8a8ebc" stroke-width="1" shape-rendering="crispEdges"/>
<path d="M423.3 614.5H430.3M423.3 617.5H430.3" stroke="#8a8ebc" stroke-width="1" shape-rendering="crispEdges"/>
<path d="M472.9 614.5H479.9M472.9 617.5H479.9" stroke="#8a8ebc" stroke-width="1" shape-rendering="crispEdges"/>
<path d="M522.4 614.5H529.4M522.4 617.5H529.4" stroke="#8a8ebc" stroke-width="1" shape-rendering="crispEdges"/>
<path d="M572.0 614.5H579.0M572.0 617.5H579.0" stroke="#8a8ebc" stroke-width="1" shape-rendering="crispEdges"/>
<path d="M621.5 614.5H628.5M621.5 617.5H628.5" stroke="#8a8ebc" stroke-width="1" shape-rendering="crispEdges"/>
<path d="M671.1 614.5H678.1M671.1 617.5H678.1" stroke="#8a8ebc" stroke-width="1" shape-rendering="crispEdges"/>
<path d="M720.7 614.5H727.7M720.7 617.5H727.7" stroke="#8a8ebc" stroke-width="1" shape-rendering="crispEdges"/>
<path d="M770.2 614.5H777.2M770.2 617.5H777.2" stroke="#8a8ebc" stroke-width="1" shape-rendering="crispEdges"/>
<path d="M819.8 614.5H826.8M819.8 617.5H826.8" stroke="#8a8ebc" stroke-width="1" shape-rendering="crispEdges"/>
<path d="M869.4 614.5H876.4M869.4 617.5H876.4" stroke="#8a8ebc" stroke-width="1" shape-rendering="crispEdges"/>
<path d="M918.9 614.5H925.9M918.9 617.5H925.9" stroke="#8a8ebc" stroke-width="1" shape-rendering="crispEdges"/>
<text x="440.90" y="650" fill="#000" textLength="224.06" xml:space="preserve">Repeating Elements by RepeatMasker</text>
<text x="152" y="664" class="r" fill="#000">RepeatMasker</text>
</svg></body></html>
